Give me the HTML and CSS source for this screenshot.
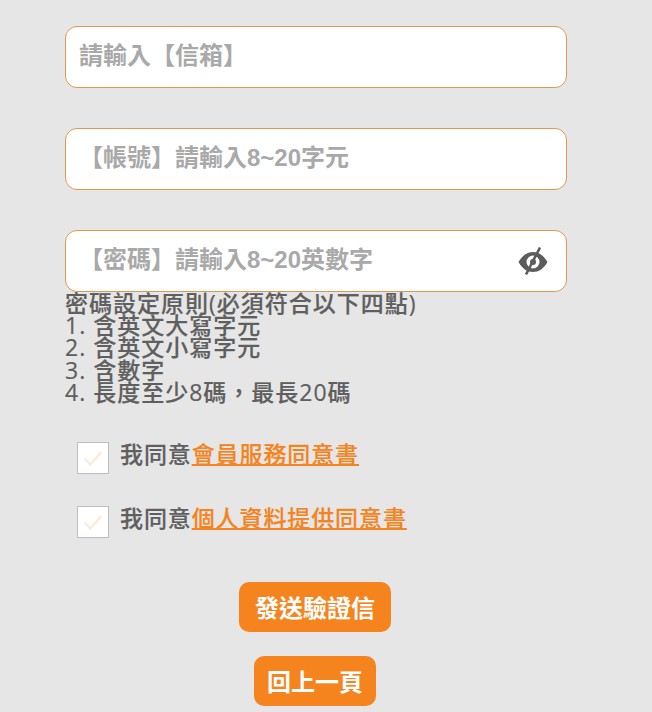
FILE: index.html
```html
<!DOCTYPE html>
<html lang="zh-Hant">
<head>
  <meta charset="UTF-8">
  <meta name="viewport" content="width=device-width, initial-scale=1.0">
  <title>註冊</title>
  <link rel="stylesheet" href="styles.css">
</head>
<body>
  <form class="form-container">
    <div class="input-wrapper">
      <input class="text-input" type="text" placeholder="請輸入【信箱】">
    </div>
    <div class="input-wrapper">
      <input class="text-input" type="text" placeholder="【帳號】請輸入8~20字元">
    </div>
    <div class="input-wrapper password-wrapper">
      <input class="text-input" type="password" placeholder="【密碼】請輸入8~20英數字">
      <svg class="eye-icon" viewBox="0 0 30 30" aria-hidden="true">
        <path class="eye-shape" fill-rule="evenodd" d="M0.500 16C4.500 9 9.500 6 15 6s10.500 3 14.500 10C25.500 23 20.500 26 15 26S4.500 23 0.500 16zM15 9.500a6.500 6.500 0 1 0 0 13a6.500 6.500 0 0 0 0-13z"/>
        <circle class="eye-shape" cx="15" cy="16" r="3"/>
        <path class="eye-slash" d="M22 1.500L8 28.500"/>
      </svg>
    </div>
    <div class="rules">
      密碼設定原則(必須符合以下四點)<br>
      1. 含英文大寫字元<br>
      2. 含英文小寫字元<br>
      3. 含數字<br>
      4. 長度至少8碼，最長20碼
    </div>
    <label class="agree-row">
      <span class="check-box">
        <svg viewBox="0 0 20 20" aria-hidden="true"><path d="M2.500 10.500L7.500 16L17.500 4.500"/></svg>
      </span>
      <span>我同意<a class="agree-link" href="#">會員服務同意書</a></span>
    </label>
    <label class="agree-row">
      <span class="check-box">
        <svg viewBox="0 0 20 20" aria-hidden="true"><path d="M2.500 10.500L7.500 16L17.500 4.500"/></svg>
      </span>
      <span>我同意<a class="agree-link" href="#">個人資料提供同意書</a></span>
    </label>
    <div class="button-container">
      <button class="orange-button send-button" type="button">發送驗證信</button>
      <button class="orange-button back-button" type="button">回上一頁</button>
    </div>
  </form>
</body>
</html>
```

FILE: styles.css
```css
body {
  margin: 0;
  background-color: #e6e6e6;
  font-family: "Open Sans", "Noto Sans CJK TC", sans-serif;
  color: #5f5f5f;
}

.form-container {
  display: flex;
  flex-direction: column;
  width: 502px;
  margin-left: 65px;
  padding-top: 26px;
}

.input-wrapper {
  position: relative;
  margin-bottom: 40px;
}

.password-wrapper {
  margin-bottom: 0;
}

.text-input {
  display: block;
  box-sizing: border-box;
  width: 100%;
  height: 62px;
  padding: 0 13px 2px;
  border: 1px solid #e3974a;
  border-radius: 12px;
  background-color: #fff;
  font-family: "Liberation Sans", "Noto Sans CJK TC", sans-serif;
  font-size: 24px;
  font-weight: 700;
  outline: none;
}

.text-input::placeholder {
  color: #a9a9a9;
  opacity: 1;
}

.eye-icon {
  position: absolute;
  top: 16px;
  right: 19px;
  width: 30px;
  height: 30px;
}

.eye-shape {
  fill: #5c5c5c;
}

.eye-slash {
  fill: none;
  stroke: #5c5c5c;
  stroke-width: 2.600;
}

.rules {
  height: 110px;
  font-size: 23px;
  font-weight: 500;
  line-height: 22.200px;
  letter-spacing: 1px;
  -webkit-text-stroke: 0.2px #5f5f5f;
}

.agree-row {
  display: flex;
  align-items: flex-start;
  gap: 11px;
  margin-left: 12px;
  margin-bottom: 30px;
  font-size: 23px;
  font-weight: 500;
  line-height: 28px;
  letter-spacing: 0.900px;
  -webkit-text-stroke: 0.2px;
}

.rules + .agree-row {
  margin-top: 38px;
}

.check-box {
  display: flex;
  align-items: center;
  justify-content: center;
  box-sizing: border-box;
  width: 32px;
  height: 32px;
  margin-top: 2px;
  border: 1px solid #bdbdbd;
  background-color: #fff;
}

.check-box svg {
  width: 22px;
  height: 22px;
  fill: none;
  stroke: #fde9d6;
  stroke-width: 2;
}

.agree-link {
  color: #f5841f;
  text-decoration: underline;
  text-decoration-thickness: 2px;
}

.button-container {
  display: flex;
  flex-direction: column;
  align-items: center;
  gap: 24px;
  margin-top: 14px;
  padding-right: 2px;
}

.orange-button {
  height: 50px;
  padding: 0 0 2px;
  border: none;
  border-radius: 10px;
  background-color: #f5841f;
  color: #fff;
  font-family: inherit;
  font-size: 24px;
  font-weight: 700;
}

.send-button {
  width: 152px;
}

.back-button {
  width: 122px;
}
```
